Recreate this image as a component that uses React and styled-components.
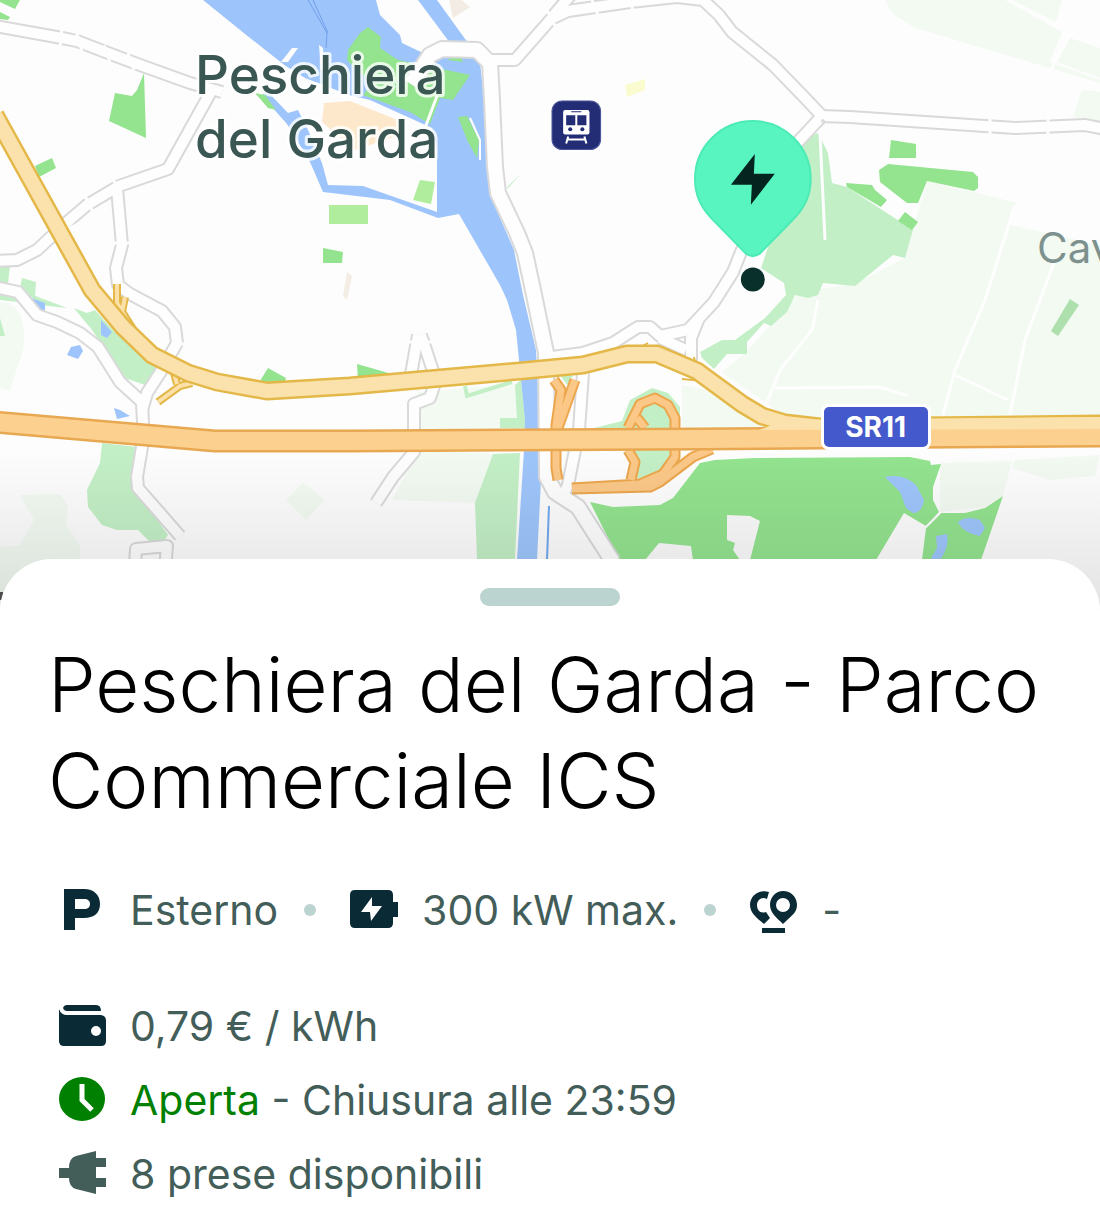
import styled, { createGlobalStyle } from "styled-components";
// -----------------------------------------------------
const roads = [
  "M-5,26 L62,38 L77,41 L108,53 L140,65 L190,83 L222,92",
  "M213,88 L168,169 L119,186 L87,205 L66,223 L37,250 L17,260 L-5,261",
  "M117,188 L122,245 L116,268 L118,285 L130,294 L162,311 L175,327 L177,343 L169,357 L160,373 L147,393 L142,410",
  "M-5,287 L18,292 L37,315 L57,322 L80,333 L98,347 L120,382 L142,402 L143,423 L142,447 L137,477 L138,488 L180,536",
  "M135,565 L136,549 L167,546 L165,570",
  "M575,-10 L553,16",
  "M488,60 L515,60 L551,19 L568,11 L630,2 L677,-3 L703,0 L719,15 L732,32 L773,65 L805,98 L822,116",
  "M820,116 L850,117 L1015,128 L1085,125 L1105,129",
  "M822,116 L797,143 L760,215 L741,252 L733,272 L714,302 L688,330 L660,336 L650,327 L638,327 L613,343 L583,353 L552,357",
  "M699,318 L691,338 L691,362",
  "M660,338 L686,350",
  "M418,335 L410,380 M421,335 L436,380 L430,398 L414,404 L414,452 L393,477 L376,503",
  "M583,373 L579,430 L568,485 L562,498",
];
const mainRoad =
  "M411,84 L430,55 L442,49 L477,50 L490,63 L492,100 L495,167 L498,193 L517,233 L525,253 L533,290 L546,353 L547,477 L555,492 L578,507 L613,562";
const yellowRoad =
  "M-5,115 L92,290 L123,327 L152,355 L188,373 L217,382 L267,391 L350,386 L520,371 L583,365 L627,354 L657,354 L697,371 L742,404 L762,416 L785,423 L820,427 L1105,424";
const orangeRoad = "M-5,422 L215,441 L350,441 L700,439 L820,438 L1105,436";
const yellowRamps =
  "M117,284 L117,303 L126,318 M125,297 L122,312 L133,329 M192,383 L180,386 L158,402 M174,373 L177,384";
const orangeRamps = [
  "M572,488 L640,484 L663,474 L675,457 L675,418 L668,405 L655,398 L640,404 L628,428",
  "M572,489 L650,487 L660,482 L693,457 L712,449",
  "M628,450 L635,462 L631,480",
  "M637,418 L645,428",
  "M575,380 L558,428",
  "M554,380 L561,390 L556,425 L556,468 L558,480",
];

const App = () => {
  return (
    <>
      <GlobalStyle />
      <Page>
        <MapArea aria-label="Mappa">
          <MapDrawing />
          <StationButton type="button" aria-label="Stazione ferroviaria">
            <TrainIcon />
          </StationButton>
          <PinButton type="button" aria-label="Punto di ricarica">
            <PinIcon />
          </PinButton>
          <RoadBadge>SR11</RoadBadge>
        </MapArea>
        <Sheet>
          <Handle type="button" aria-label="Espandi scheda" />
          <Title>Peschiera del Garda - Parco Commerciale ICS</Title>
          <Features>
            <Item>
              <ParkingIcon />
              <span>Esterno</span>
            </Item>
            <Dot />
            <Item>
              <BatteryIcon />
              <span>300 kW max.</span>
            </Item>
            <Dot />
            <Item>
              <OperatorIcon />
              <span>-</span>
            </Item>
          </Features>
          <Details>
            <Item>
              <WalletIcon />
              <span>0,79 € / kWh</span>
            </Item>
            <Item>
              <ClockIcon />
              <span>
                <Open>Aperta</Open> - Chiusura alle 23:59
              </span>
            </Item>
            <Item>
              <PlugIcon />
              <span>8 prese disponibili</span>
            </Item>
          </Details>
        </Sheet>
      </Page>
    </>
  );
};
export default App;
// -----------------------------------------------------
const MapDrawing = () => (
  <MapSvg viewBox="0 0 1100 620" preserveAspectRatio="xMidYMin slice">
    <defs>
      <linearGradient id="shade" x1="0" y1="0" x2="0" y2="1">
        <stop offset="0" stopColor="#000" stopOpacity="0" />
        <stop offset="1" stopColor="#000" stopOpacity="0.11" />
      </linearGradient>
    </defs>
    <rect width="1100" height="620" fill="#fdfdfd" />
    {/* fields */}
    <g fill="#f2faf2">
      <path d="M885,0 L1005,0 L1062,32 L1050,62 L1100,80 L1100,83 L915,28 L893,14z" />
      <path d="M1012,0 L1062,0 L1056,22z M1070,38 L1100,48 L1100,78 L1056,62z M1082,90 L1100,92 L1100,122 L1073,117z" />
      <path d="M927,181 L1017,203 L1010,225 L1100,245 L1100,418 L790,420 L722,372 L745,353 L800,292 L855,284 L905,258z" />
      <path d="M418,392 L515,384 L520,430 L418,430z M418,450 L493,454 L476,503 L392,500z" />
      <path d="M682,385 L706,390 L770,428 L682,428z" />
      <path d="M0,302 C25,300 30,340 18,365 L10,390 L0,388z" />
      <path d="M20,495 L60,494 L68,505 L66,525 L80,545 L80,590 L0,600 L0,547 L20,545 L34,520z" />
      <path d="M303,483 L325,500 L306,520 L286,500z M1015,460 L1100,455 L1095,476 L1050,480 L1012,468z M940,463 L1012,461 L1003,495 L985,507 L940,512z" />
    </g>
    <path
      d="M985,300 L955,370 L943,415 M1055,260 L1025,340 L1010,415 M818,300 L812,330 L780,370 L766,405 M775,388 L880,387 L908,396 M955,375 L1008,400 M985,300 L1015,205 M1070,35 L1048,75 L1048,125"
      fill="none"
      stroke="#fdfefd"
      strokeWidth="3"
    />
    {/* light parks */}
    <g fill="#c3efc6">
      <path d="M797,140 L818,133 L828,153 L832,183 L847,187 L913,230 L905,258 L893,255 L855,286 L823,283 L818,295 L808,298 L795,295 L787,312 L771,326 L764,323 L747,342 L747,354 L727,354 L714,369 L702,358 L700,352 L722,340 L735,340 L765,318 L786,295 L784,283 L761,268 L772,235z" />
      <path d="M102,443 L137,447 L133,487 L168,535 L163,542 L150,542 L138,530 L117,530 L102,525 L88,507 L87,490 L100,463z" />
      <path d="M74,308 L87,313 L95,310 L113,330 L157,368 L145,385 L122,377 L110,360 L100,342 L92,330z M0,266 L10,266 L8,283 L0,286z M22,278 L36,282 L35,298 L20,288z M0,290 L12,291 L18,302 L0,300z M25,292 L67,308 L40,305z M0,318 L5,336 L0,336z" />
      <path d="M493,454 L520,453 L515,559 L477,559 L475,503z M500,418 L517,418 L515,385 L521,380 L526,428 L500,428z" />
      <path d="M594,428 L622,421 L630,400 L652,388 L668,393 L680,407 L680,470 L660,480 L632,478 L630,440z M506,190 L522,173 L508,186z M560,375 L573,376 L567,385z" />
      <path d="M437,163 L437,212 L412,202 L420,178z" />
    </g>
    <path d="M465,386 L467,396 L512,382" fill="none" stroke="#c3efc6" strokeWidth="4" />
    {/* lake and river */}
    <path
      d="M203,0 L437,0 L468,43 L480,62 L484,100 L490,195 L514,250 L523,295 L536,350 L540,430 L541,480 L537,560 L517,560 L524,450 L525,420 L519,360 L516,330 L507,300 L500,285 L459,214 L438,218 L390,200 L323,192 L310,162 L287,124 L262,96 L283,64 L245,34z"
      fill="#9ec5fb"
    />
    <path d="M308,0 L327,33 L326,48 M313,0 L328,33" fill="none" stroke="#6f9eea" strokeWidth="1" />
    <path d="M549,506 L547,560" stroke="#6fa8ee" strokeWidth="2" />
    <g fill="#fdfdfd">
      <path d="M376,0 L380,15 L400,35 L402,43 L423,53 L435,45 L450,43 L418,0z" />
      <path d="M250,62 L281,63 L305,78 L349,95 L370,100 L432,128 L437,150 L437,212 L363,186 L328,185 L322,163 L308,130 L298,110 L288,113 L268,92z" />
      <path d="M281,62 L292,48 L298,48 L288,62z M319,45 L323,48 L324,70 L321,70z" />
    </g>
    <path d="M324,103 L350,101 L405,123 L400,135 L355,150 L322,122z" fill="#fde8cc" />
    <path d="M449,0 L459,-2 L470,7 L453,18z" fill="#f2ece4" />
    <path d="M347,272 L352,276 L347,300 L343,296z" fill="#f4ede4" />
    <path d="M625,85 L645,79 L645,90 L627,97z" fill="#fbfbd0" />
    {/* parks */}
    <g fill="#93e38f">
      <path d="M348,50 L360,33 L368,27 L381,37 L380,48 L398,60 L428,66 L470,75 L453,100 L440,98 L430,124 L410,112 L363,95 L372,84 L347,60z" />
      <path d="M458,117 L467,116 L479,140 L477,158 L468,142z M447,60 L460,55 L463,62z M255,93 L265,95 L276,110 L268,108z" />
      <path d="M144,73 L146,138 L109,121 L115,93 L132,96 L137,90z M35,166 L52,158 L56,168 L39,177z M0,0 L20,0 L15,9 L0,2z M0,12 L10,17 L8,20 L0,19z" />
      <path d="M323,248 L343,252 L342,263 L323,263z M260,381 L268,368 L286,378 L284,384z M357,364 L392,374 L358,380z" />
      <path d="M891,140 L916,144 L916,158 L889,158z M879,170 L888,164 L973,172 L978,177 L978,188 L974,191 L927,181 L918,203 L907,203 L880,182z" />
      <path d="M846,183 L872,185 L875,190 L887,200 L881,207 L847,187z M905,212 L918,222 L912,230 L898,221z" />
      <path d="M590,502 L613,507 L660,505 L673,498 L700,463 L715,460 L755,458 L910,457 L930,461 L931,465 L941,464 L933,487 L933,500 L939,512 L926,526 L904,513 L876,560 L619,560z" />
      <path d="M941,513 L965,513 L985,508 L1003,496 L981,560 L922,560 L926,528z" />
    </g>
    <path d="M925,528 L941,512" stroke="#fdfdfd" strokeWidth="2" />
    <g fill="#b0ee9d">
      <path d="M329,205 L368,205 L368,224 L329,224z M420,180 L435,182 L431,204 L413,200z" />
    </g>
    <path d="M1070,299 L1079,305 L1058,336 L1051,331z" fill="#aee0ae" />
    <path d="M820,134 L825,240" stroke="#fdfdfd" strokeWidth="3" />
    <g fill="#fbfbfb">
      <path d="M727,515 L750,516 L760,521 L750,560 L740,560 L733,550 L735,543 L727,540z" />
      <path d="M645,560 L659,543 L691,546 L693,560z" />
    </g>
    <g fill="#9ec5fb">
      <path d="M885,477 Q903,473 916,485 L924,500 Q922,513 913,513 L906,508 L900,492z" />
      <path d="M958,522 Q966,515 980,520 L985,528 L980,536 Q962,532 958,522z M936,536 L947,534 Q950,546 940,560 L930,560 L937,548z" />
      <path d="M67,355 L71,347 L80,345 L83,351 L78,359z M31,298 L45,303 L45,312 L35,307z M101,320 L112,332 L107,338 L101,335z M114,408 L120,410 L130,416 L117,419z" />
    </g>
    {/* minor roads, the casing lies below all the fillings */}
    <g fill="none" stroke="#d9d9d9" strokeLinejoin="round">
      {roads.map((d) => (
        <path key={d} d={d} strokeWidth="14" />
      ))}
      <path d={mainRoad} strokeWidth="18" />
    </g>
    <g fill="none" stroke="#fefefe" strokeLinejoin="round">
      {roads.map((d) => (
        <path key={d} d={d} strokeWidth="10" />
      ))}
      <path d={mainRoad} strokeWidth="14" />
      <path d="M437,96 L425,128" strokeWidth="3" />
      <path d="M470,118 L480,140 L480,160" strokeWidth="2" />
    </g>
    <circle cx="823" cy="121" r="2" fill="#dcdcdc" />
    {/* gaps in the casing where lanes join */}
    <g fill="none" stroke="#fdfdfd" strokeWidth="3">
      <path d="M60,47 L62,28 M76,30 L82,52 M104,45 L110,63 M128,53 L134,70 M84,194 L94,214 M112,176 L120,196 M66,230 L78,224 M110,243 L132,243 M545,6 L556,28 M592,0 L600,20 M630,0 L634,14 M990,118 L990,138 M1048,118 L1048,138 M172,340 L188,346 M404,342 L436,342" />
    </g>
    {/* highways */}
    <g fill="none" strokeLinejoin="round">
      <path d={yellowRamps} stroke="#e4b848" strokeWidth="8" />
      <path d={yellowRamps} stroke="#fbe1a9" strokeWidth="4" />
      {orangeRamps.map((d) => (
        <path key={d} d={d} stroke="#eca64c" strokeWidth="11" />
      ))}
      {orangeRamps.map((d) => (
        <path key={d} d={d} stroke="#fbc888" strokeWidth="7" />
      ))}
      <path d="M697,371 L694,357 M715,382 L682,379 M632,352 L648,343" stroke="#e4b848" strokeWidth="2" />
      <path d={yellowRoad} stroke="#e4b848" strokeWidth="19" />
      <path d={yellowRoad} stroke="#fbe1ab" strokeWidth="14" />
      <path d={orangeRoad} stroke="#e8a851" strokeWidth="23" />
      <path d={orangeRoad} stroke="#fcd18f" strokeWidth="18" />
    </g>
    <path d="M783,420 L1100,417 L1100,430 L757,431z" fill="#fbe1ab" />
    <path d="M750,430 L1100,429 L1100,444 L750,446z" fill="#fcd18f" />
    <path d="M0,592 L3,592 L3,600 L0,600z" fill="#555" />
    <rect y="450" width="1100" height="170" fill="url(#shade)" />
    <TownLabel x="195" y="94">
      <tspan>Peschiera</tspan>
      <tspan x="195" dy="64">
        del Garda
      </tspan>
    </TownLabel>
    <PlaceLabel x="1037" y="263">
      Cav
    </PlaceLabel>
  </MapSvg>
);

const TrainIcon = () => (
  <svg viewBox="0 0 50 50" width="100%" aria-hidden="true">
    <rect x="1" y="1" width="48" height="48" rx="10" fill="#222d75" stroke="#4a5599" />
    <rect x="12" y="10" width="26" height="24" rx="2" fill="#fff" />
    <path d="M15,15h9v10h-9z M26,15h9v10h-9z M20,11h10v1h-10z" fill="#222d75" />
    <circle cx="19" cy="29" r="2" fill="#222d75" />
    <circle cx="31" cy="29" r="2" fill="#222d75" />
    <path d="M17,36 L15,43 M33,36 L35,43 M16,39 H34" stroke="#fff" strokeWidth="2" />
  </svg>
);

const PinIcon = () => (
  <svg viewBox="0 0 118 172" width="100%" aria-hidden="true">
    <path
      d="M59,1 A58,58 0 0 1 117,59 C117,76 111,87 101,98 L67,133 Q59,140 51,133 L17,98 C7,87 1,76 1,59 A58,58 0 0 1 59,1z"
      fill="#58f5c0"
      stroke="#4cebb5"
      strokeWidth="2"
    />
    <path d="M61,34 L60,54 L81,54 L57,85 L58,65 L37,65z" fill="#04241f" />
    <circle cx="59" cy="160" r="12" fill="#0a302c" />
  </svg>
);

const ParkingIcon = () => (
  <Icon viewBox="0 0 48 48">
    <path
      fillRule="evenodd"
      d="M6,3 H26 C36,3 42,9 42,18 C42,27 36,32 26,32 H17 V44 H6z M17,13 V23 H26 C30,23 32,21 32,18 C32,15 30,13 26,13z"
    />
  </Icon>
);

const BatteryIcon = () => (
  <Icon viewBox="0 0 48 48">
    <path
      fillRule="evenodd"
      d="M5,4 H38 Q43,4 43,9 V16 H48 V31 H43 V37 Q43,42 38,42 H5 Q0,42 0,37 V9 Q0,4 5,4z M22,11 L11,26 H20 L21,35 L32,20 H22z"
    />
  </Icon>
);

const OperatorIcon = () => (
  <Icon viewBox="0 0 48 48">
    <path d="M19,6 C10,3 0,9 0,19 C0,27 7,32 14,38 L20,32 L16,26 C10,28 7,24 7,19 C7,14 12,10 17,13z" />
    <path
      fillRule="evenodd"
      d="M33,5 C41,5 47,11 47,19 C47,27 41,30 33,38 C27,32 20,27 20,19 C20,11 26,5 33,5z M33,12 A7,7 0 1 0 33,26 A7,7 0 1 0 33,12z"
    />
    <path d="M12,42 H35 V47 H12z" />
  </Icon>
);

const WalletIcon = () => (
  <Icon viewBox="0 0 48 48">
    <path d="M9,3 H38 Q43,3 43,9 H9 Q6,9 5,6 Q6,3 9,3z" />
    <path
      fillRule="evenodd"
      d="M1,7 Q3,13 9,13 H43 Q48,14 48,18 V39 Q48,44 43,44 H6 Q1,44 1,39z M38,24 A5,5 0 1 0 38,34 A5,5 0 1 0 38,24z"
    />
  </Icon>
);

const ClockIcon = () => (
  <Icon viewBox="0 0 48 48" $color="#008000">
    <ellipse cx="24" cy="23" rx="23" ry="22" />
    <path d="M24,8 V24 L34,34" fill="none" stroke="#fff" strokeWidth="5" />
  </Icon>
);

const PlugIcon = () => (
  <Icon viewBox="0 0 48 48" $color="#435d59">
    <path d="M38,1 V8 H48 V17 H38 V28 H48 V37 H38 V44 L18,39 Q11,37 11,28 H1 V18 H11 Q11,8 18,6z" />
  </Icon>
);
// -----------------------------------------------------
const GlobalStyle = createGlobalStyle`
  * {
    box-sizing: border-box;
  }
  body {
    margin: 0;
    background-color: #fff;
    font-family: Inter, "Liberation Sans", sans-serif;
  }
`;

const Page = styled.main`
  min-height: 100vh;
  display: flex;
  flex-direction: column;
  overflow: hidden;
`;

const MapArea = styled.section`
  position: relative;
  width: 100%;
  aspect-ratio: 110 / 62;
`;

const MapSvg = styled.svg`
  display: block;
  width: 100%;
  height: 100%;
`;

const TownLabel = styled.text`
  font-size: 53px;
  font-weight: 500;
  fill: #3b5753;
  stroke: rgba(255, 255, 255, 0.8);
  stroke-width: 6px;
  stroke-linejoin: round;
  paint-order: stroke;
`;

const PlaceLabel = styled.text`
  font-size: 42px;
  fill: #7d918e;
`;

/* markers lie over the map at their share of its size */
const Marker = styled.button`
  position: absolute;
  padding: 0;
  border: 0;
  background-color: transparent;
  line-height: 0;
  cursor: pointer;
`;

const StationButton = styled(Marker)`
  left: 50.1%;
  top: 16.2%;
  width: 4.6%;
`;

const PinButton = styled(Marker)`
  left: 63.1%;
  top: 19.4%;
  width: 10.7%;
`;

const RoadBadge = styled.span`
  position: absolute;
  left: 74.6%;
  top: 65.2%;
  display: flex;
  justify-content: center;
  align-items: center;
  width: 110px;
  height: 46px;
  border: 3px solid #fff;
  border-radius: 8px;
  background-color: #4459cb;
  color: #fff;
  font-size: 28px;
  font-weight: 700;
`;

const Sheet = styled.section`
  position: relative;
  flex: 1;
  margin-top: -61px;
  padding: 29px 48px 24px;
  display: flex;
  flex-direction: column;
  border-radius: 52px 52px 0 0;
  background-color: #fff;
`;

const Handle = styled.button`
  align-self: center;
  width: 140px;
  height: 18px;
  padding: 0;
  border: 0;
  border-radius: 9px;
  background-color: #bbd4cf;
  cursor: pointer;
`;

const Title = styled.h1`
  margin: 30px 0 0;
  color: #000;
  font-size: 76px;
  font-weight: 300;
  line-height: 96px;
`;

const Features = styled.div`
  display: flex;
  flex-wrap: wrap;
  align-items: center;
  margin: 57px 10px 0;
`;

const Details = styled.div`
  display: flex;
  flex-direction: column;
  gap: 24px;
  margin: 66px 10px 0;
`;

const Item = styled.div`
  display: flex;
  align-items: center;
  gap: 24px;
  color: #435d59;
  font-size: 41px;
  line-height: 50px;
`;

const Icon = styled.svg.attrs({ "aria-hidden": true })`
  flex: none;
  width: 48px;
  height: 48px;
  fill: ${({ $color }) => $color || "#0a2a35"};
`;

const Dot = styled.span`
  width: 12px;
  height: 12px;
  margin: 0 34px 0 26px;
  border-radius: 50%;
  background-color: #bbd4cf;
`;

const Open = styled.span`
  color: #008000;
`;
